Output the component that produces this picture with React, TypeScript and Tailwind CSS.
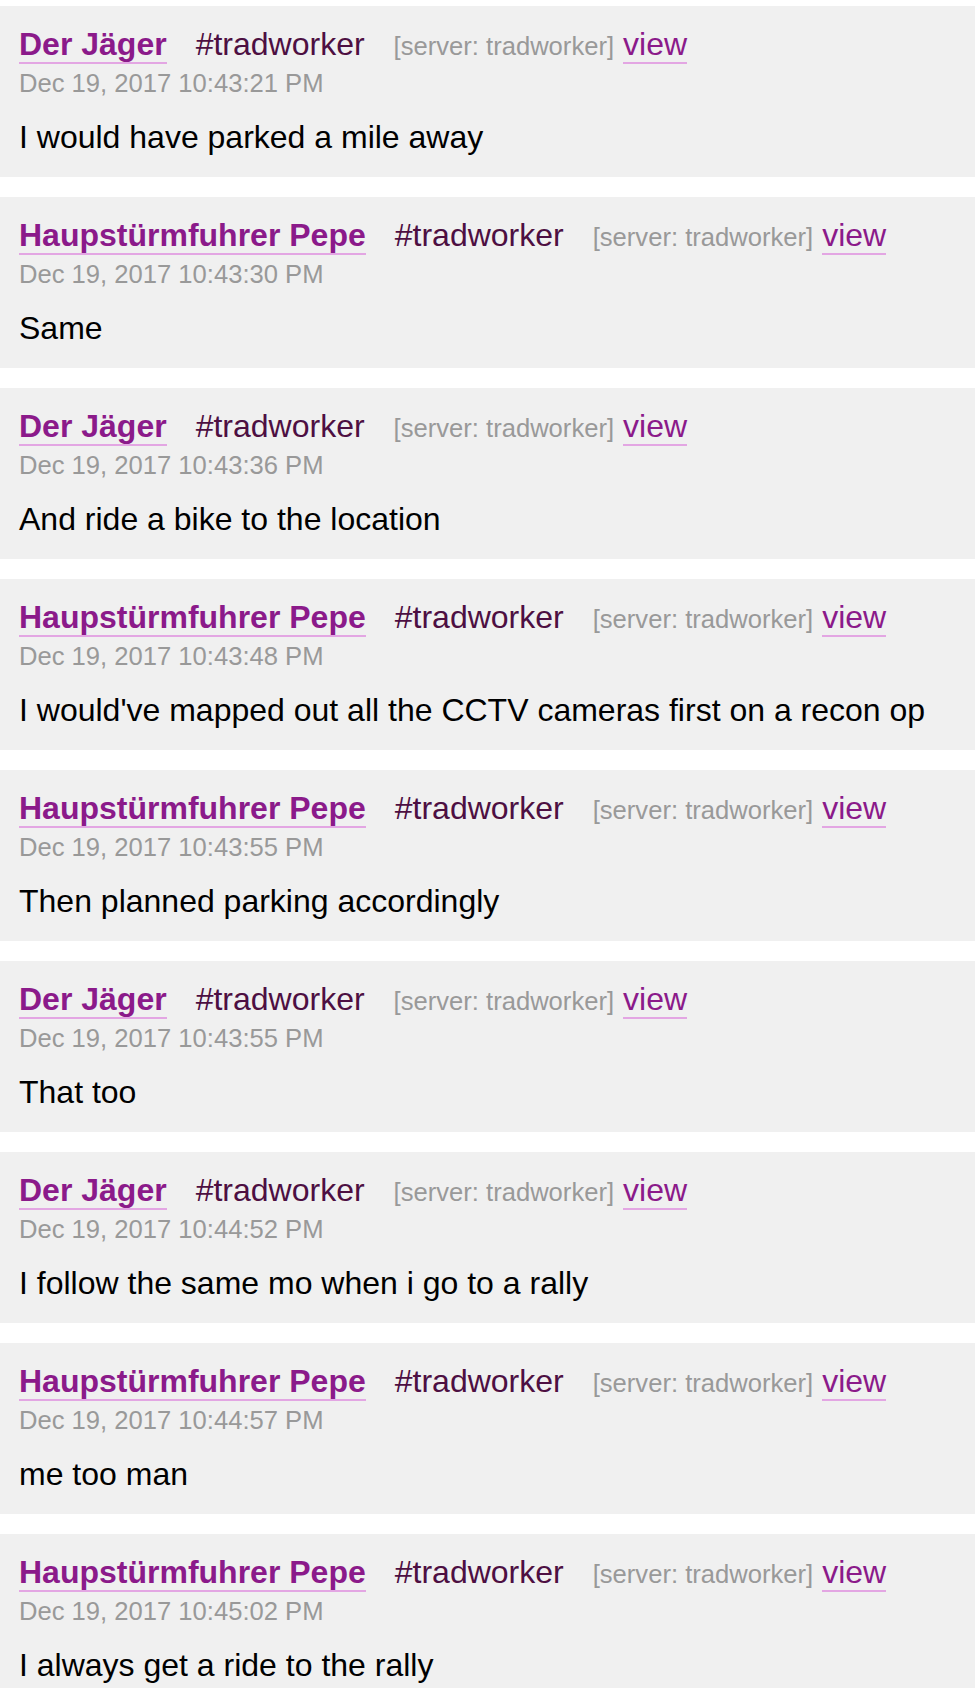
const messages = [
  { user: "Der Jäger", time: "Dec 19, 2017 10:43:21 PM", text: "I would have parked a mile away" },
  { user: "Haupstürmfuhrer Pepe", time: "Dec 19, 2017 10:43:30 PM", text: "Same" },
  { user: "Der Jäger", time: "Dec 19, 2017 10:43:36 PM", text: "And ride a bike to the location" },
  { user: "Haupstürmfuhrer Pepe", time: "Dec 19, 2017 10:43:48 PM", text: "I would've mapped out all the CCTV cameras first on a recon op" },
  { user: "Haupstürmfuhrer Pepe", time: "Dec 19, 2017 10:43:55 PM", text: "Then planned parking accordingly" },
  { user: "Der Jäger", time: "Dec 19, 2017 10:43:55 PM", text: "That too" },
  { user: "Der Jäger", time: "Dec 19, 2017 10:44:52 PM", text: "I follow the same mo when i go to a rally" },
  { user: "Haupstürmfuhrer Pepe", time: "Dec 19, 2017 10:44:57 PM", text: "me too man" },
  { user: "Haupstürmfuhrer Pepe", time: "Dec 19, 2017 10:45:02 PM", text: "I always get a ride to the rally" },
];

const Message = ({ user, time, text }: { user: string; time: string; text: string }) => (
  <div className="bg-[#f0f0f0] pl-[19px] pr-4 pt-[19.5px] pb-[21.5px]">
    <div className="h-[37px] whitespace-nowrap text-[32px] leading-[37px]">
      <a href="#" className="border-b-2 border-[#e3a6e3] font-bold text-[#8b1a8a]">
        {user}
      </a>
      <span className="ml-[29px] text-[#4d0f42]">#tradworker</span>
      <span className="ml-[29px] text-[25.6px] leading-none text-[#999999]">[server: tradworker]</span>
      <a href="#" className="ml-[9px] border-b-2 border-[#e3a6e3] text-[#8b1a8a]">
        view
      </a>
    </div>
    <div className="mt-[6px] text-[25.6px] leading-[29px] text-[#999999]">{time}</div>
    <p className="mt-[21px] text-[32px] leading-[37px] text-black">{text}</p>
  </div>
);

export default function App() {
  return (
    <div className="min-h-[1688px] bg-white pt-[6px] font-['Liberation_Sans',Arial,sans-serif]">
      <div className="flex flex-col gap-[20px]">
        {messages.map((m, i) => (
          <Message key={i} {...m} />
        ))}
      </div>
    </div>
  );
}
